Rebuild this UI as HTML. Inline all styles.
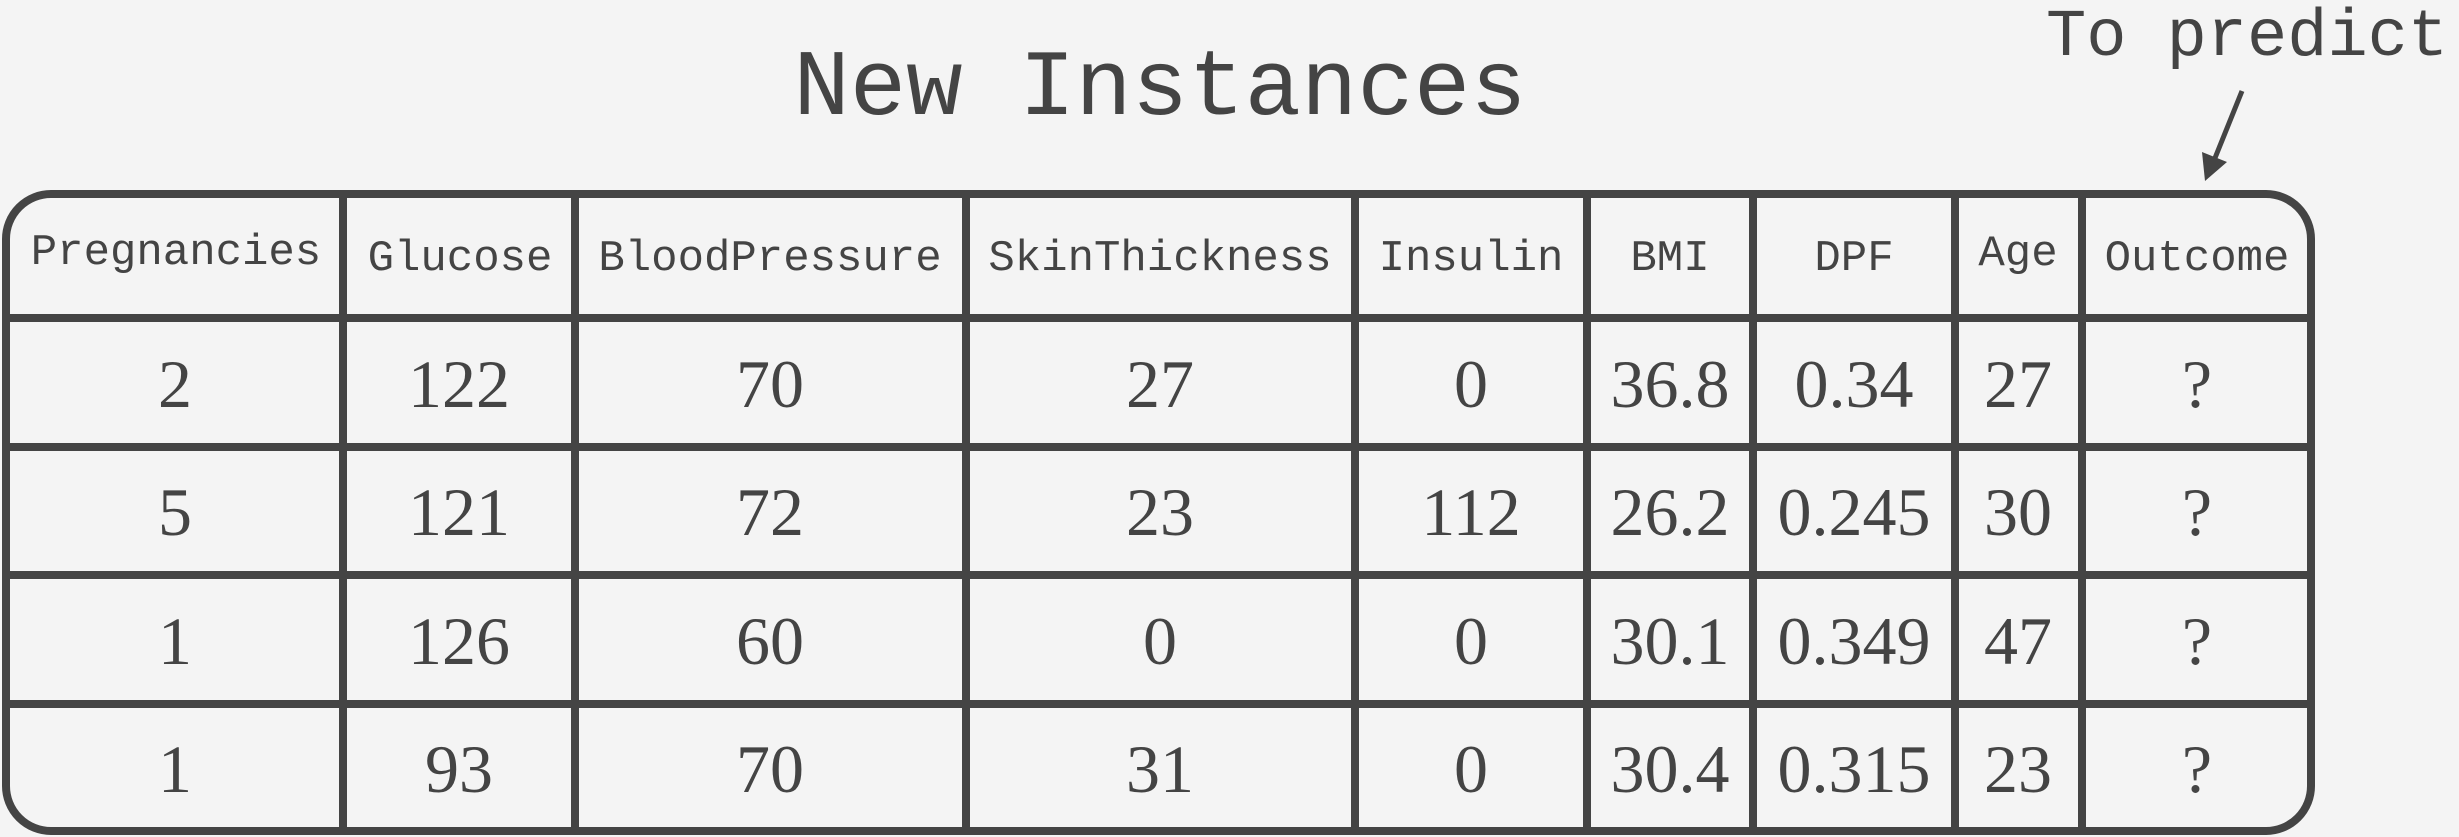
<!DOCTYPE html>
<html><head><meta charset="utf-8"><style>
html,body{margin:0;padding:0;background:#f4f4f4;}
svg{display:block}
.h{font-family:"Liberation Mono",monospace;font-size:44px;fill:#444;text-anchor:middle}
.n{font-family:"Liberation Serif",serif;font-size:68px;fill:#444;text-anchor:middle}
</style></head><body>
<svg width="2459" height="837" viewBox="0 0 2459 837" xmlns="http://www.w3.org/2000/svg">
<rect width="2459" height="837" fill="#f4f4f4"/>
<text x="1160" y="114" font-family="Liberation Mono, monospace" font-size="94" fill="#444" text-anchor="middle">New Instances</text>
<text x="2046" y="55" font-family="Liberation Mono, monospace" font-size="67" fill="#444">To predict</text>
<line x1="2242" y1="91" x2="2215" y2="158" stroke="#444" stroke-width="5"/>
<polygon points="2205,181 2202,152 2227,162" fill="#444"/>
<g stroke="#444" stroke-width="8" fill="none">
<rect x="6" y="194" width="2305" height="637" rx="45" ry="45"/>
<line x1="6" y1="318" x2="2311" y2="318"/>
<line x1="6" y1="447" x2="2311" y2="447"/>
<line x1="6" y1="575" x2="2311" y2="575"/>
<line x1="6" y1="704" x2="2311" y2="704"/>
<line x1="343" y1="194" x2="343" y2="831"/>
<line x1="575" y1="194" x2="575" y2="831"/>
<line x1="966" y1="194" x2="966" y2="831"/>
<line x1="1355" y1="194" x2="1355" y2="831"/>
<line x1="1587" y1="194" x2="1587" y2="831"/>
<line x1="1753" y1="194" x2="1753" y2="831"/>
<line x1="1955" y1="194" x2="1955" y2="831"/>
<line x1="2082" y1="194" x2="2082" y2="831"/>
</g>
<g class="h">
<text x="176" y="264">Pregnancies</text>
<text x="460" y="270">Glucose</text>
<text x="770" y="270">BloodPressure</text>
<text x="1160" y="270">SkinThickness</text>
<text x="1471" y="270">Insulin</text>
<text x="1670" y="270">BMI</text>
<text x="1854" y="270">DPF</text>
<text x="2018" y="265">Age</text>
<text x="2197" y="270">Outcome</text>
</g>
<g class="n">
<text x="175" y="407">2</text><text x="459" y="407">122</text><text x="770" y="407">70</text><text x="1160" y="407">27</text><text x="1471" y="407">0</text><text x="1670" y="407">36.8</text><text x="1854" y="407">0.34</text><text x="2018" y="407">27</text><text x="2197" y="407">?</text>
<text x="175" y="535">5</text><text x="459" y="535">121</text><text x="770" y="535">72</text><text x="1160" y="535">23</text><text x="1471" y="535">112</text><text x="1670" y="535">26.2</text><text x="1854" y="535">0.245</text><text x="2018" y="535">30</text><text x="2197" y="535">?</text>
<text x="175" y="664">1</text><text x="459" y="664">126</text><text x="770" y="664">60</text><text x="1160" y="664">0</text><text x="1471" y="664">0</text><text x="1670" y="664">30.1</text><text x="1854" y="664">0.349</text><text x="2018" y="664">47</text><text x="2197" y="664">?</text>
<text x="175" y="792">1</text><text x="459" y="792">93</text><text x="770" y="792">70</text><text x="1160" y="792">31</text><text x="1471" y="792">0</text><text x="1670" y="792">30.4</text><text x="1854" y="792">0.315</text><text x="2018" y="792">23</text><text x="2197" y="792">?</text>
</g>
</svg>
</body></html>
